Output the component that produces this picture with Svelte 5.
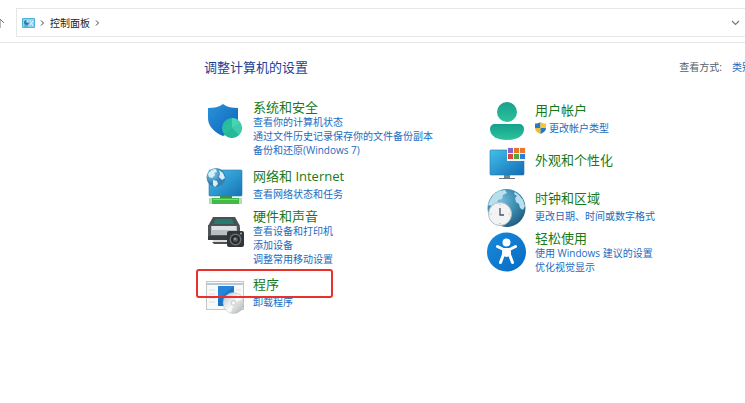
<script>
  const columns = [
    [
      { icon: 'security', title: '系统和安全', links: ['查看你的计算机状态', '通过文件历史记录保存你的文件备份副本', '备份和还原(Windows 7)'] },
      { icon: 'network', title: '网络和 Internet', links: ['查看网络状态和任务'] },
      { icon: 'hardware', title: '硬件和声音', links: ['查看设备和打印机', '添加设备', '调整常用移动设置'] },
      { icon: 'programs', title: '程序', links: ['卸载程序'], marked: true },
    ],
    [
      { icon: 'users', title: '用户帐户', links: ['更改帐户类型'], admin: true },
      { icon: 'appearance', title: '外观和个性化', links: [] },
      { icon: 'clock', title: '时钟和区域', links: ['更改日期、时间或数字格式'] },
      { icon: 'access', title: '轻松使用', links: ['使用 Windows 建议的设置', '优化视觉显示'] },
    ],
  ];
  const tiles = ['#8a63c9', '#e0762f', '#e8792a', '#d9473d', '#5aa23a', '#2f7fd6'];
</script>

<svelte:head><title>控制面板</title></svelte:head>

<div class="window">
  <header class="toolbar">
    <button class="up" aria-label="向上">
      <svg width="10" height="12" viewBox="0 0 10 12" fill="none" stroke="#777"><path d="M5 11V2M1 6l4-4 4 4" /></svg>
    </button>
    <nav class="address" aria-label="地址">
      <svg class="cp" width="13" height="10" viewBox="0 0 13 10">
        <rect width="13" height="10" rx="1" fill="#4fb0de" /><rect x="1" y="1" width="11" height="8" fill="#8fd3f2" />
        <circle cx="4.500" cy="4.500" r="2.500" fill="#247fab" /><path d="M4.500 4.500V2A2.500 2.500 0 0 1 7 4.500z" fill="#d8f3ff" />
        <path d="M8 7l3-4M8 3h1M10 7h1" stroke="#fff" /><path d="M2 8h4" stroke="#2e9f83" />
      </svg>
      <svg class="sep" width="5" height="8" viewBox="0 0 5 8" fill="none" stroke="#444"><path d="M1 1.500L3.500 4 1 6.500" /></svg>
      <a class="crumb" href="#control">控制面板</a>
      <svg class="sep" width="5" height="8" viewBox="0 0 5 8" fill="none" stroke="#444"><path d="M1 1.500L3.500 4 1 6.500" /></svg>
      <button class="history" aria-label="以前的位置">
        <svg width="9" height="6" viewBox="0 0 9 6" fill="none" stroke="#777" stroke-width="1.2"><path d="M1 1l3.500 3.500L8 1" /></svg>
      </button>
    </nav>
  </header>

  <main>
    <div class="heading">
      <h1>调整计算机的设置</h1>
      <div class="view"><span>查看方式:</span><a href="#view">类别</a></div>
    </div>

    <div class="columns">
      {#each columns as column}
        <div class="column">
          {#each column as item}
            <section class="entry {item.icon}">
              <svg class="icon" width="39" height="40" viewBox="0 0 39 40" aria-hidden="true">
                {#if item.icon === 'security'}
                  <defs>
                    <linearGradient id="sh" x2="1" y2="1"><stop stop-color="#2a93d9" /><stop offset="1" stop-color="#0c62ba" /></linearGradient>
                    <linearGradient id="shc" x2="1" y2="1"><stop stop-color="#22b79c" /><stop offset="1" stop-color="#35c9a4" /></linearGradient>
                  </defs>
                  <path d="M18 2c4 3 9 4 15 4v10c0 8-6 14-15 18C9 30 3 24 3 16V6c6 0 11-1 15-4z" fill="url(#sh)" />
                  <circle cx="27" cy="26" r="10" fill="url(#shc)" />
                  <path d="M27 26V16a10 10 0 0 1 8.500 5z" fill="#48d3b3" /><path d="M27 26l8.500-5a10 10 0 0 1-1.500 12z" fill="#3dcbac" />
                  <path d="M27 26l7 7a10 10 0 0 1-15-1z" fill="#26b899" />
                {:else if item.icon === 'network'}
                  <defs><linearGradient id="nm" x2="1" y2="1"><stop stop-color="#48bfea" /><stop offset="1" stop-color="#1473b5" /></linearGradient>
                    <radialGradient id="ng" cx=".3" cy=".3"><stop stop-color="#8dd1ee" /><stop offset="1" stop-color="#3480b0" /></radialGradient></defs>
                  <rect x="4" y="2" width="33" height="26" rx="1" fill="url(#nm)" stroke="#287ea9" stroke-width=".6" />
                  <rect x="15" y="28" width="12" height="2" fill="#3f8f52" />
                  <rect x="4" y="30" width="33" height="6" rx="1" fill="#41bb45" /><path d="M8 31.500h25" stroke="#7edb7b" />
                  <path d="M4 30h3v6H4zM34 30h3v6h-3z" fill="#b5dcb8" />
                  <circle cx="11" cy="9.500" r="9.500" fill="url(#ng)" />
                  <path d="M3 6c2-3 4-5 8-5l1 3-3 1 1 2-3 3-3-1zM14 2l4 3 2 5-3 2-3-3 1-3zM8 12l4 1 1 3-3 3-2-2z" fill="#d6eff8" />
                {:else if item.icon === 'hardware'}
                  <path d="M8 1h22l5 9H3z" fill="#4a5052" /><path d="M11 3h16l2 5H8z" fill="#267c6c" />
                  <path d="M3 9h31l1 2v12H3z" fill="#505558" /><rect x="6" y="10" width="26" height="9" fill="#b9bec1" />
                  <path d="M7 10h24v4H7z" fill="#dfe2e4" /><path d="M3 20h32v4H3z" fill="#363b3d" />
                  <path d="M8 24h19v2H8z" fill="#dadddf" /><path d="M7 26h17v2H9z" fill="#4c5052" />
                  <rect x="22" y="15" width="17" height="16" rx="2" fill="#313537" />
                  <circle cx="30.500" cy="23.500" r="6" fill="#6a7073" /><circle cx="30.500" cy="23.500" r="4.500" fill="#26292b" />
                  <circle cx="30.500" cy="23.500" r="2.500" fill="#525a5f" /><circle cx="30" cy="23" r="1" fill="#a0aab0" /><circle cx="36" cy="17.500" r="1" fill="#aaa" />
                {:else if item.icon === 'programs'}
                  <defs><linearGradient id="pd" x2="1" y2="1"><stop stop-color="#b8bcbf" /><stop offset=".45" stop-color="#f2f2f2" /><stop offset="1" stop-color="#aaaeb1" /></linearGradient></defs>
                  <rect x="1.500" y="1.500" width="37" height="28" fill="#f8f9fa" stroke="#c3c7ca" /><path d="M2 4h36" stroke="#b8c7d2" stroke-width="2" />
                  <path d="M4 10h6M4 14h6M4 18h6M4 22h6M31 10h5M31 14h5M31 18h5" stroke="#dde0e3" />
                  <rect x="13" y="6" width="16" height="20" fill="#1875cc" /><path d="M13 6h16l-16 14z" fill="#2685d8" />
                  <circle cx="28.500" cy="23" r="10.500" fill="url(#pd)" stroke="#b5b8ba" stroke-width=".5" />
                  <path d="M29 23l4-9a10 10 0 0 1 5 5zM29 23l-8 7a10 10 0 0 0 5 3z" fill="#fff" opacity=".7" />
                  <circle cx="28.500" cy="23" r="3" fill="#d3d6d8" /><circle cx="28.500" cy="23" r="1.500" fill="#fff" />
                {:else if item.icon === 'users'}
                  <defs><linearGradient id="ut" x2="0" y2="1"><stop stop-color="#16a08c" /><stop offset="1" stop-color="#2cc39a" /></linearGradient></defs>
                  <circle cx="20" cy="10" r="10" fill="url(#ut)" />
                  <path d="M8 22h24c3 0 5 2 5 5 0 7-7 11-17 11S3 34 3 27c0-3 2-5 5-5z" fill="url(#ut)" />
                {:else if item.icon === 'appearance'}
                  <defs><linearGradient id="am" x2="1" y2="1"><stop stop-color="#42c1e9" /><stop offset="1" stop-color="#126bb5" /></linearGradient></defs>
                  <path d="M17 29h6v3h-6z" fill="#718791" /><path d="M12 32h16v1H12z" fill="#647780" />
                  <rect x="3" y="4" width="34" height="25" rx="1" fill="url(#am)" stroke="#2775a2" stroke-width=".6" />
                  <rect x="20" y="1" width="19" height="14" fill="#f4f5f6" />
                  {#each tiles as tile, i}
                    <rect x={21 + (i % 3) * 6} y={2 + Math.floor(i / 3) * 6} width="5" height="5" fill={tile} />
                  {/each}
                {:else if item.icon === 'clock'}
                  <defs><radialGradient id="cg" cx=".35" cy=".3" r=".75"><stop stop-color="#73bddb" /><stop offset=".6" stop-color="#3787ad" /><stop offset="1" stop-color="#235d7c" /></radialGradient></defs>
                  <circle cx="19.500" cy="20" r="19" fill="url(#cg)" />
                  <path d="M3 12l4-6 5-3 6-1 2 3-4 2-1 4-4 1-1 4-5 2-4-1zM28 4l4 3 4 5 2 6-2 4-3-2-1-4-3-2-1-4 2-2-3-2zM13 7l3 2-2 2z" fill="#b9dfec" />
                  <path d="M7 15l4 2-2 3-5-1z" fill="#a9d7e7" />
                  <circle cx="13" cy="26" r="11.500" fill="#f2f3f4" stroke="#b5bdc2" />
                  <path d="M13 20v7h4" fill="none" stroke="#4b555b" stroke-width="1.3" />
                  <path d="M13 16v1M13 35v1M3.500 26h1M21.500 26h1" stroke="#aaa" />
                {:else}
                  <defs><linearGradient id="ac" x2="1" y2="1"><stop stop-color="#168add" /><stop offset="1" stop-color="#096bc2" /></linearGradient></defs>
                  <circle cx="19.500" cy="20" r="19.500" fill="url(#ac)" /><circle cx="19.500" cy="10.500" r="4" fill="#fff" />
                  <path d="M10.500 14.500l6 3h6l6-3M16.500 17.500v5l-3 8M22.500 17.500v5l3 8" fill="none" stroke="#fff" stroke-width="3" stroke-linecap="round" stroke-linejoin="round" />
                  <path d="M16 17h7v7l-3.500 1-3.500-1z" fill="#fff" />
                {/if}
              </svg>
              <div class="text" class:loose={item.links.length === 1}>
                <h2><a href="#{item.icon}">{item.title}</a></h2>
                <ul>
                  {#each item.links as link}
                    <li>
                      {#if item.admin}
                        <svg class="uac" width="11" height="12" viewBox="0 0 11 12" aria-hidden="true">
                          <path d="M5.500 0C4 1 2 1.500 0 1.500V6h5.500z" fill="#2b78bd" /><path d="M5.500 0C7 1 9 1.500 11 1.500V6H5.500z" fill="#f5c637" />
                          <path d="M0 6h5.500v6C2 10.500 0 9 0 6z" fill="#f0bd2d" /><path d="M11 6H5.500v6C9 10.500 11 9 11 6z" fill="#2b78bd" />
                        </svg>
                      {/if}
                      <a href="#{item.icon}-task">{link}</a>
                    </li>
                  {/each}
                </ul>
              </div>
              {#if item.marked}<div class="mark"></div>{/if}
            </section>
          {/each}
        </div>
      {/each}
    </div>
  </main>
</div>

<style>
  :global(body) { background: #fff; }
  .window {
    font: 10px/14px "Open Sans", "Noto Sans CJK SC", sans-serif;
    color: #333;
    overflow: hidden;
    min-height: 100vh;
  }
  a { color: #1a6cc0; text-decoration: none; }
  a:hover { text-decoration: underline; }
  button { border: 0; padding: 0; background: none; display: flex; }
  h1, h2, ul { margin: 0; padding: 0; font-weight: 400; }
  li { list-style: none; display: flex; align-items: center; gap: 3px; }
  svg { display: block; flex: none; }

  .toolbar { display: flex; align-items: center; padding: 8px 0 5px; border-bottom: 1px solid #e6e6e6; }
  .up { width: 16px; justify-content: flex-start; }
  .up svg { margin-left: -5px; }
  .address {
    flex: 1;
    display: flex;
    align-items: center;
    height: 27px;
    padding: 0 5px;
    border: 1px solid #e6e6e6;
    border-right: 0;
  }
  .sep { margin: 0 5px; }
  .crumb { color: #222; }
  .history { margin-left: auto; }

  .heading { display: flex; justify-content: space-between; align-items: center; padding: 15px 0 0 204px; }
  h1 { font-size: 13px; line-height: 18px; color: #1f3f96; }
  .view { display: flex; gap: 10px; margin-right: -7px; color: #555f6b; white-space: nowrap; }

  .columns { display: grid; grid-template-columns: 282px 1fr; padding: 23px 0 0 205px; }
  .column + .column { padding-top: 3px; }
  .entry { position: relative; display: flex; gap: 9px; align-items: flex-start; white-space: nowrap; }
  .icon { margin-bottom: -8px; }
  h2 { font-size: 13px; line-height: 16px; }
  h2 a { color: #177a17; }
  .loose h2 { margin-bottom: 3px; }

  .security { padding-bottom: 11px; }
  .security .icon { margin-top: 3px; }
  .network { height: 40px; }
  .hardware { padding-bottom: 10px; }
  .hardware .icon { margin-top: 8px; }
  .programs .icon { margin-top: 4px; }
  .users { height: 50px; }
  .appearance { height: 38px; }
  .appearance .icon { margin-top: -6px; }
  .clock { height: 40px; }
  .clock .icon { margin-top: -2px; }
  .access .icon { margin-top: 2px; }

  .mark {
    position: absolute;
    left: -9px;
    top: -7px;
    width: 133px;
    height: 25px;
    border: 2px solid #e8312b;
    border-radius: 3px;
  }
</style>
